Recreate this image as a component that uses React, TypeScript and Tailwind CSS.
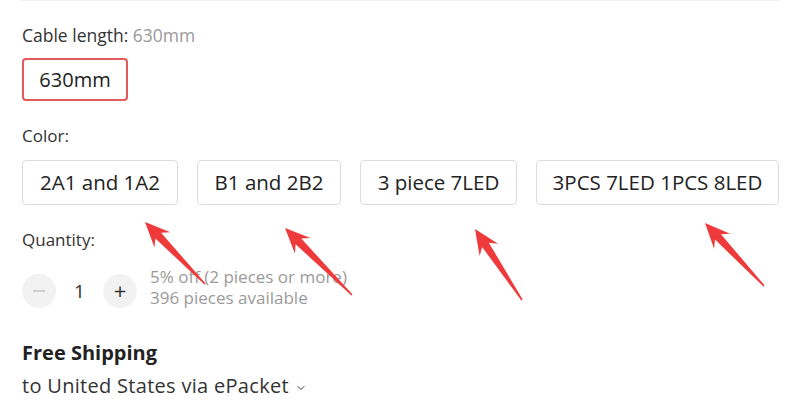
import { ChevronDown } from "lucide-react";

const colors = ["2A1 and 1A2", "B1 and 2B2", "3 piece 7LED", "3PCS 7LED 1PCS 8LED"];
const widths = ["w-[156px]", "w-[144px]", "w-[157px]", "w-[243px]"];

type Pt = [number, number];

const arrows: { tip: Pt; tail: Pt }[] = [
  { tip: [145, 222], tail: [205, 284] },
  { tip: [285, 228], tail: [352, 295] },
  { tip: [475, 229], tail: [522, 300] },
  { tip: [705, 223], tail: [764, 286] },
];

function arrowPoints(tip: Pt, tail: Pt) {
  const dx = tail[0] - tip[0];
  const dy = tail[1] - tip[1];
  const len = Math.hypot(dx, dy);
  const ux = dx / len;
  const uy = dy / len;
  const nx = -uy;
  const ny = ux;
  const at = (d: number, w: number): Pt => [
    tip[0] + ux * d + nx * w,
    tip[1] + uy * d + ny * w,
  ];
  const pts: Pt[] = [
    tip,
    at(25, 11),
    at(19, 4),
    [tail[0] + nx * 0.8, tail[1] + ny * 0.8],
    [tail[0] - nx * 0.8, tail[1] - ny * 0.8],
    at(19, -4),
    at(25, -11),
  ];
  return pts.map((p) => p.join(",")).join(" ");
}

export default function App() {
  return (
    <div className="relative w-[800px] h-[414px] overflow-hidden bg-white font-['Open_Sans',sans-serif] text-[#333]">
      <div className="h-px bg-[#f2f2f2] mx-[20px]" />
      <div className="pl-[22px]">
        <div className="mt-[22px] text-[17.5px] leading-[24px]">
          Cable length: <span className="text-[#999]">630mm</span>
        </div>

        <div className="mt-[11px] w-[106px] h-[43px] flex items-center justify-center rounded-[4px] border-2 border-[#e25b5b] text-[20px] text-[#222]">
          630mm
        </div>

        <div className="mt-[23px] text-[17px] leading-[24px]">Color:</div>

        <div className="mt-[12px] flex gap-[19px]">
          {colors.map((c, i) => (
            <div
              key={c}
              className={`${widths[i]} h-[45px] flex items-center justify-center rounded-[4px] border border-[#dcdcdc] text-[20.5px] text-[#222]`}
            >
              {c}
            </div>
          ))}
        </div>

        <div className="mt-[23px] text-[17px] leading-[24px]">Quantity:</div>

        <div className="mt-[22px] flex items-start">
          <div className="w-[34px] h-[34px] rounded-full bg-[#f2f2f2] flex items-center justify-center">
            <div className="w-[12px] h-[1.5px] bg-[#cfcfcf]" />
          </div>
          <div className="w-[47px] h-[34px] flex items-center justify-center text-[19px] text-[#333]">
            1
          </div>
          <div className="w-[34px] h-[34px] rounded-full bg-[#f2f2f2] flex items-center justify-center text-[22px] text-[#333] leading-none">
            <span className="-mt-[2px]">+</span>
          </div>
          <div className="ml-[13px] -mt-[8px] text-[17px] leading-[21px] text-[#9a9a9a]">
            <div>5% off (2 pieces or more)</div>
            <div>396 pieces available</div>
          </div>
        </div>

        <div className="mt-[32px] text-[20px] leading-[26px] font-bold text-[#222]">
          Free Shipping
        </div>
        <div className="mt-[7px] flex items-center text-[20px] leading-[26px] tracking-[0.3px] text-[#333]">
          to United States via ePacket
          <ChevronDown className="ml-[6px] mt-[4px] w-[12px] h-[12px]" strokeWidth={2} />
        </div>
      </div>

      <svg className="absolute inset-0 pointer-events-none" width="800" height="414">
        {arrows.map((a, i) => (
          <polygon key={i} points={arrowPoints(a.tip, a.tail)} fill="#ee3a3a" />
        ))}
      </svg>
    </div>
  );
}
